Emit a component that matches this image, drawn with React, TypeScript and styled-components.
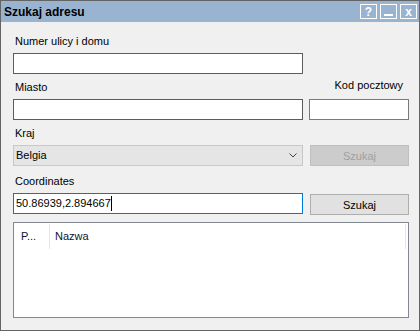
import styled, { createGlobalStyle } from 'styled-components';

const GlobalStyle = createGlobalStyle`
  html, body {
    margin: 0;
    padding: 0;
    background: #ffffff;
  }
  * {
    box-sizing: border-box;
  }
`;

const Window = styled.div`
  width: 420px;
  height: 331px;
  border: 1px solid #646464;
  background: #f0f0f0;
  display: flex;
  flex-direction: column;
  font-family: 'Liberation Sans', Arial, sans-serif;
  font-size: 11px;
  color: #000;
`;

const TitleBar = styled.div`
  height: 21px;
  flex-shrink: 0;
  background: #99b4d1;
  display: flex;
  align-items: center;
  padding: 0 2px 0 3px;
`;

const Title = styled.span`
  font-size: 12px;
  font-weight: bold;
  line-height: 14px;
`;

const CaptionButtons = styled.div`
  margin-left: auto;
  display: flex;
  gap: 3px;
`;

const CaptionButton = styled.div`
  width: 17px;
  height: 15px;
  border: 1px solid #ffffff;
  color: #ffffff;
  font-size: 12px;
  font-weight: bold;
  line-height: 12px;
  display: flex;
  align-items: center;
  justify-content: center;
`;

const MinimizeBar = styled.span`
  width: 9px;
  height: 2px;
  margin-top: 6px;
  background: #ffffff;
`;

const Body = styled.div`
  flex: 1;
  padding: 13px 10px 0 12px;
  display: flex;
  flex-direction: column;
`;

const Row = styled.div<{ $mt: number }>`
  display: grid;
  grid-template-columns: 290px 99px;
  column-gap: 7px;
  align-items: end;
  margin-top: ${(p) => p.$mt}px;
`;

const Field = styled.div<{ $pull?: number }>`
  display: flex;
  flex-direction: column;
  gap: 5px;
  margin-left: ${(p) => -(p.$pull || 0)}px;
`;

const Label = styled.label<{ $raised?: boolean; $right?: boolean }>`
  line-height: 13px;
  height: 13px;
  padding: ${(p) => (p.$right ? '0 6px 0 0' : '0 2px')};
  text-align: ${(p) => (p.$right ? 'right' : 'left')};
  margin-bottom: ${(p) => (p.$raised ? 2 : 0)}px;
`;

const TextInput = styled.input<{ $light?: boolean }>`
  height: 21px;
  width: 100%;
  margin: 0;
  border: 1px solid ${(p) => (p.$light ? '#7a7a7a' : '#5c5c5c')};
  background: #ffffff;
  padding: 0 2px;
  font-family: inherit;
  font-size: 11px;
  outline: none;
`;

const FocusedBox = styled.div`
  height: 21px;
  border: 1px solid #0078d7;
  background: #ffffff;
  padding: 0 2px;
  line-height: 19px;
  display: flex;
  align-items: center;
`;

const Caret = styled.span`
  width: 1px;
  height: 15px;
  background: #000;
`;

const Combo = styled.div`
  height: 21px;
  border: 1px solid #c8c8c8;
  background: #e5e5e5;
  padding: 0 5px 0 2px;
  display: flex;
  align-items: center;
  justify-content: space-between;
  line-height: 19px;
`;

const Button = styled.button<{ $disabled?: boolean; $drop?: number }>`
  height: 21px;
  width: 100%;
  margin: 0;
  padding: 0;
  font-family: inherit;
  font-size: 11px;
  border: 1px solid ${(p) => (p.$disabled ? '#bfbfbf' : '#adadad')};
  background: ${(p) => (p.$disabled ? '#cccccc' : '#e1e1e1')};
  color: ${(p) => (p.$disabled ? '#a0a0a0' : '#000')};
  transform: translateY(${(p) => p.$drop || 0}px);
`;

const List = styled.div`
  margin-top: 8px;
  height: 96px;
  border: 1px solid #828790;
  background: #ffffff;
  padding-top: 1px;
`;

const Header = styled.div`
  display: flex;
  height: 25px;
  padding-right: 2px;
`;

const HeaderCell = styled.div<{ $width?: number; $pad: number }>`
  ${(p) => (p.$width ? `width: ${p.$width}px;` : 'flex: 1;')}
  padding-left: ${(p) => p.$pad}px;
  line-height: 25px;
  border-right: 1px solid #e5e5e5;
  color: #0b1633;
`;

export default function App() {
  return (
    <>
      <GlobalStyle />
      <Window>
        <TitleBar>
          <Title>Szukaj adresu</Title>
          <CaptionButtons>
            <CaptionButton>?</CaptionButton>
            <CaptionButton>
              <MinimizeBar />
            </CaptionButton>
            <CaptionButton>x</CaptionButton>
          </CaptionButtons>
        </TitleBar>
        <Body>
          <Row $mt={0}>
            <Field>
              <Label>Numer ulicy i domu</Label>
              <TextInput readOnly />
            </Field>
          </Row>
          <Row $mt={5}>
            <Field>
              <Label>Miasto</Label>
              <TextInput readOnly />
            </Field>
            <Field $pull={1}>
              <Label $raised $right>
                Kod pocztowy
              </Label>
              <TextInput readOnly $light />
            </Field>
          </Row>
          <Row $mt={7}>
            <Field>
              <Label>Kraj</Label>
              <Combo>
                <span>Belgia</span>
                <svg width="8" height="5" viewBox="0 0 8 5">
                  <polyline points="0.5,0.5 4,4 7.5,0.5" fill="none" stroke="#444" strokeWidth="1" />
                </svg>
              </Combo>
            </Field>
            <Button $disabled>Szukaj</Button>
          </Row>
          <Row $mt={9}>
            <Field>
              <Label>Coordinates</Label>
              <FocusedBox>
                <span>50.86939,2.894667</span>
                <Caret />
              </FocusedBox>
            </Field>
            <Button $drop={1}>Szukaj</Button>
          </Row>
          <List>
            <Header>
              <HeaderCell $width={36} $pad={7}>
                P...
              </HeaderCell>
              <HeaderCell $pad={5}>Nazwa</HeaderCell>
            </Header>
          </List>
        </Body>
      </Window>
    </>
  );
}
